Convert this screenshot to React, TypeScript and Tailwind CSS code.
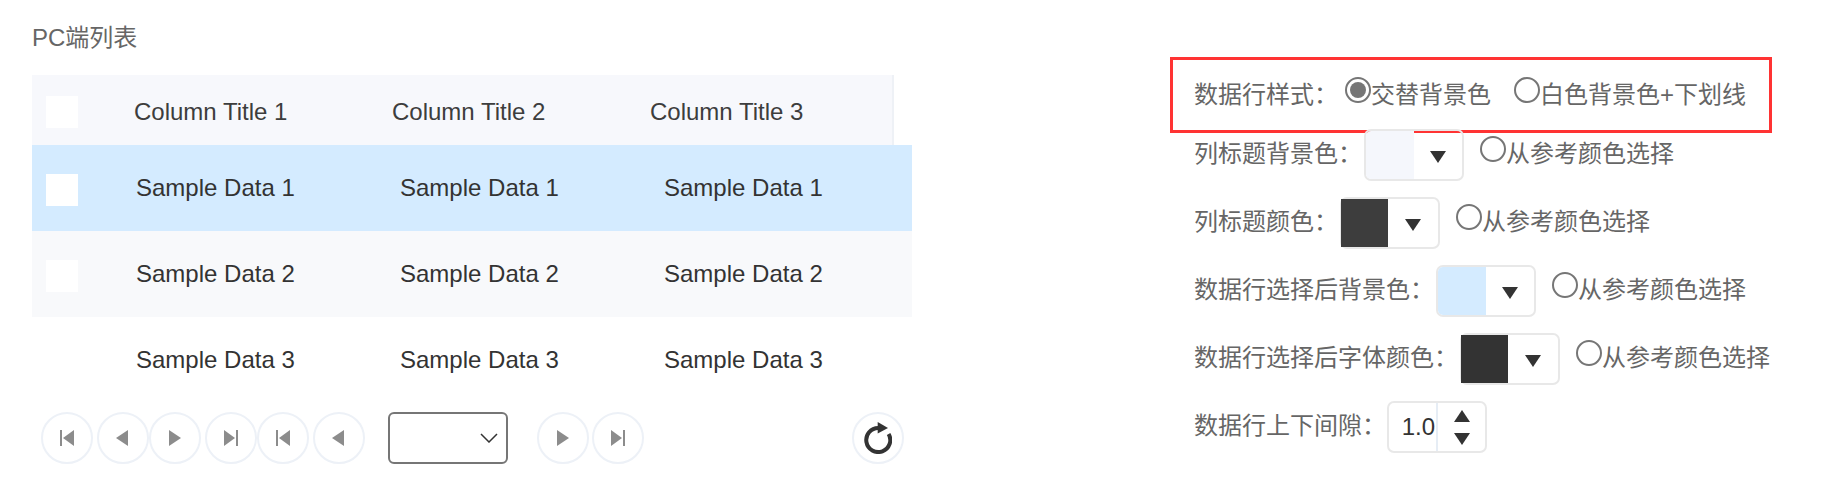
import React from "react";

const font = "font-['Liberation_Sans','Noto_Sans_CJK_SC',sans-serif]";

const columns = ["Column Title 1", "Column Title 2", "Column Title 3"];
const rows = [
  { text: "Sample Data 1", bg: "bg-[#d4ebff]", box: true },
  { text: "Sample Data 2", bg: "bg-[#f8f9fb]", box: true },
  { text: "Sample Data 3", bg: "bg-white", box: false },
];

const Glyph = ({ type }: { type: string }) => (
  <svg width="14" height="16" viewBox="0 0 14 16" fill="#8c8c8c">
    {type === "first" && <path d="M0 0h2v16H0zM14 0v16L3 8z" />}
    {type === "prev" && <path d="M12 0v16L0 8z" />}
    {type === "next" && <path d="M1 0v16l12-8z" />}
    {type === "last" && <path d="M12 0h2v16h-2zM0 0v16l11-8z" />}
  </svg>
);

const PageButton = ({ type, className = "" }: { type: string; className?: string }) => (
  <button className={`w-[52px] h-[52px] rounded-full border-2 border-[#edf1f7] flex items-center justify-center shrink-0 ${className}`}>
    <Glyph type={type} />
  </button>
);

const Radio = ({ checked = false, className = "" }: { checked?: boolean; className?: string }) => (
  <span className={`w-[26px] h-[26px] rounded-full border-2 border-[#767676] flex items-center justify-center shrink-0 bg-white ${className}`}>
    {checked && <span className="w-[16px] h-[16px] rounded-full bg-[#767676]" />}
  </span>
);

const ColorPick = ({ color, dark = false }: { color: string; dark?: boolean }) => (
  <div className={`w-[100px] h-[52px] flex rounded-[7px] border-2 border-[#e8e8e8] shrink-0 ml-[2px] mt-[2px] ${dark ? "" : "overflow-hidden"}`}>
    <div className={dark ? "w-[47px] -ml-[1px] h-full" : "w-[48px] h-full"} style={{ backgroundColor: color }} />
    <div className="flex-1 flex items-center justify-center pt-[3px]">
      <svg width="16" height="12" viewBox="0 0 16 12"><path d="M0 0h16L8 12z" fill="#333" /></svg>
    </div>
  </div>
);

const ColorRow = ({ label, color, dark }: { label: string; color: string; dark?: boolean }) => (
  <div className="flex items-center h-[52px] mt-[16px] first:mt-0">
    <span>{label}</span>
    <ColorPick color={color} dark={dark} />
    <span className="ml-[16px] flex items-center">
      <Radio className="-mt-[10px]" />
      <span>从参考颜色选择</span>
    </span>
  </div>
);

export default function App() {
  return (
    <div className={`${font} w-[1843px] h-[487px] bg-white flex text-[24px] overflow-hidden`}>
      <div className="w-[880px] ml-[32px] shrink-0">
        <div className="text-[#666] leading-[28px] pt-[24px] mb-[23px]">PC端列表</div>
        <div className="w-[862px] h-[70px] pt-[4px] bg-[#f7f8fc] border-r-2 border-[#eef1f6] flex items-center text-[#3d3d3d] overflow-hidden">
          <div className="w-[32px] h-[32px] bg-white ml-[14px] mr-[56px] shrink-0" />
          {columns.map((c) => (
            <div key={c} className="w-[258px] shrink-0">{c}</div>
          ))}
        </div>
        {rows.map((r) => (
          <div key={r.text} className={`h-[86px] flex items-center text-[#333] overflow-hidden ${r.bg}`}>
            <div className={`w-[32px] h-[32px] ml-[14px] mr-[58px] mt-[4px] shrink-0 ${r.box ? "bg-white" : ""}`} />
            {[0, 1, 2].map((i) => (
              <div key={i} className="w-[264px] shrink-0">{r.text}</div>
            ))}
          </div>
        ))}
        <div className="flex items-center mt-[9px] ml-[9px]">
          <PageButton type="first" />
          <PageButton type="prev" className="ml-[4px]" />
          <PageButton type="next" />
          <PageButton type="last" className="ml-[4px]" />
          <PageButton type="first" />
          <PageButton type="prev" className="ml-[4px]" />
          <div className="w-[120px] h-[52px] ml-[23px] border-2 border-[#767676] rounded-[6px] flex items-center justify-end pr-[8px]">
            <svg width="18" height="10" viewBox="0 0 18 10" fill="none" stroke="#333" strokeWidth="1.5"><path d="M1 1l8 8 8-8" /></svg>
          </div>
          <PageButton type="next" className="ml-[29px]" />
          <PageButton type="last" className="ml-[3px]" />
          <button className="w-[52px] h-[52px] ml-[208px] rounded-full border-2 border-[#edf1f7] flex items-center justify-center">
            <svg width="28" height="32" viewBox="0 0 28 32" fill="none">
              <path d="M14.3 6A12 12 0 1 0 24.6 11.9" stroke="#333" strokeWidth="4" />
              <path d="M13.7 0v11.5L24 6z" fill="#333" />
            </svg>
          </button>
        </div>
      </div>

      <div className="ml-[282px] pt-[57px] text-[#666]">
        <div className="w-[602px] h-[76px] border-[3px] border-[#f33] flex items-center pl-[21px] -ml-[24px]">
          <span>数据行样式：</span>
          <span className="ml-[7px] flex items-center"><Radio checked className="-mt-[10px]" /><span>交替背景色</span></span>
          <span className="ml-[23px] flex items-center"><Radio className="-mt-[10px]" /><span>白色背景色+下划线</span></span>
        </div>
        <div className="-mt-[5px]">
          <ColorRow label="列标题背景色：" color="#f5f7fc" />
          <ColorRow label="列标题颜色：" color="#3d3d3d" dark />
          <ColorRow label="数据行选择后背景色：" color="#d4ebff" />
          <ColorRow label="数据行选择后字体颜色：" color="#333333" dark />
          <div className="flex items-center h-[52px] mt-[16px]">
            <span>数据行上下间隙：</span>
            <div className="w-[100px] h-[52px] ml-[1px] mt-[2px] flex rounded-[7px] border-2 border-[#e8e8e8]">
              <div className="w-[49px] pr-[1px] text-[#333] flex items-center justify-end border-r-2 border-[#e6edf5]">1.0</div>
              <div className="flex-1 flex flex-col items-center justify-center gap-[11px]">
                <svg width="16" height="12" viewBox="0 0 16 12"><path d="M0 12h16L8 0z" fill="#333" /></svg>
                <svg width="16" height="12" viewBox="0 0 16 12"><path d="M0 0h16L8 12z" fill="#333" /></svg>
              </div>
            </div>
          </div>
        </div>
      </div>
    </div>
  );
}
